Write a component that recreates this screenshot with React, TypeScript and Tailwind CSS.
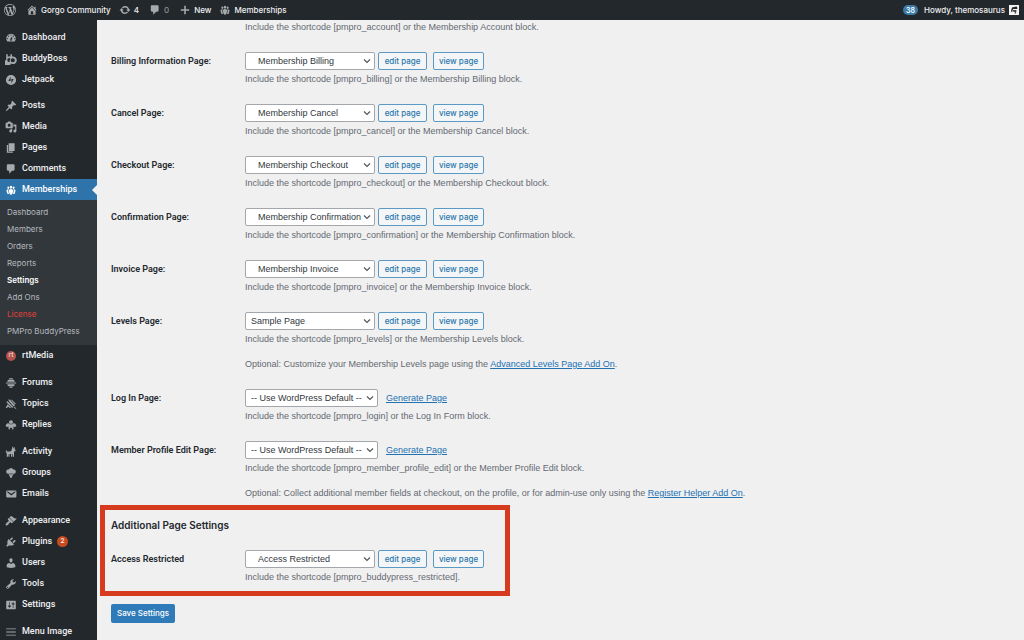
import type { ReactNode } from "react";

const ICONS = {
  wordpress:
    "M20 10c0-5.51-4.49-10-10-10C4.48 0 0 4.49 0 10c0 5.52 4.48 10 10 10 5.51 0 10-4.48 10-10zM7.78 15.37L4.37 6.22c.55-.02 1.17-.08 1.17-.08.5-.06.44-1.13-.06-1.11 0 0-1.45.11-2.37.11-.18 0-.37 0-.58-.01C4.12 2.69 6.87 1.11 10 1.11c2.33 0 4.45.87 6.05 2.34-.68-.11-1.65.39-1.65 1.58 0 .74.45 1.36.9 2.1.35.61.55 1.36.55 2.46 0 1.49-1.4 5-1.4 5l-3.03-8.37c.54-.02.82-.17.82-.17.5-.05.44-1.25-.06-1.22 0 0-1.44.12-2.38.12-.87 0-2.33-.12-2.33-.12-.5-.03-.56 1.2-.06 1.22l.92.08 1.26 3.41zM17.41 10c.24-.64.74-1.87.43-4.25.7 1.29 1.05 2.71 1.05 4.25 0 3.29-1.73 6.24-4.4 7.78.97-2.59 1.94-5.2 2.92-7.78zM6.1 18.09C3.12 16.65 1.11 13.53 1.11 10c0-1.3.23-2.48.72-3.59C3.25 10.3 4.67 14.2 6.1 18.09zm4.03-6.63l2.58 6.98c-.86.29-1.76.45-2.71.45-.79 0-1.57-.11-2.29-.33.81-2.38 1.62-4.74 2.42-7.1z",
  home: "M16 8.5l1.53 1.53-1.06 1.06L10 4.6l-6.47 6.49-1.06-1.06L10 2.5l4 4v-2h2v4zm-6-2.46l6 5.99V18H4v-5.97zM12 17v-5H8v5h4z",
  update:
    "M10.2 3.28c3.53 0 6.43 2.61 6.92 6h2.08l-3.5 4-3.5-4h2.32c-.45-1.97-2.21-3.45-4.32-3.45-1.45 0-2.73.71-3.54 1.78L4.95 5.66C6.23 4.2 8.11 3.28 10.2 3.28zm-.4 13.44c-3.52 0-6.43-2.61-6.92-6H.8l3.5-4c1.17 1.33 2.33 2.67 3.5 4H5.48c.45 1.97 2.21 3.45 4.32 3.45 1.45 0 2.73-.71 3.54-1.78l1.71 1.95c-1.28 1.46-3.15 2.38-5.25 2.38z",
  comments:
    "M5 2h9c1.1 0 2 .9 2 2v7c0 1.1-.9 2-2 2h-2l-5 5v-5H5c-1.1 0-2-.9-2-2V4c0-1.1.9-2 2-2z",
  plus: "M17 8.7v2.6h-5.7V17H8.7v-5.7H3V8.7h5.7V3h2.6v5.7z",
  groups:
    "M8.03 4.46c-.29 1.28.55 3.46 1.97 3.46 1.41 0 2.25-2.18 1.96-3.46-.22-.98-1.08-1.63-1.96-1.63-.89 0-1.74.65-1.97 1.63zm-4.13.9c-.25 1.08.47 2.93 1.67 2.93s1.92-1.85 1.67-2.93c-.19-.83-.92-1.39-1.67-1.39s-1.48.56-1.67 1.39zm8.86 0c-.25 1.08.47 2.93 1.66 2.93 1.2 0 1.92-1.85 1.67-2.93-.19-.83-.92-1.39-1.67-1.39-.74 0-1.47.56-1.66 1.39zm-.59 11.43l1.25-4.3C14.2 10 12.71 8.47 10 8.47c-2.72 0-4.21 1.53-3.44 4.02l1.26 4.3C8.05 17.51 9 18 10 18c.98 0 1.94-.49 2.17-1.21zm-6.1-7.63c-.49.67-.96 1.83-.42 3.59l1.12 3.79c-.34.2-.77.31-1.2.31-.85 0-1.65-.41-1.85-1.03l-1.07-3.65c-.65-2.11.61-3.4 2.92-3.4.27 0 .54.02.79.06-.1.1-.2.22-.29.33zm8.35-.39c2.31 0 3.58 1.29 2.92 3.4l-1.07 3.65c-.2.62-1 1.03-1.85 1.03-.43 0-.86-.11-1.2-.31l1.11-3.77c.55-1.78.08-2.94-.42-3.61-.08-.11-.18-.23-.28-.33.25-.04.51-.06.79-.06z",
  dashboard:
    "M3.76 16h12.48A7.998 7.998 0 0 0 10 3a7.998 7.998 0 0 0-6.24 13zM10 4c.55 0 1 .45 1 1s-.45 1-1 1-1-.45-1-1 .45-1 1-1zM6 6c.55 0 1 .45 1 1s-.45 1-1 1-1-.45-1-1 .45-1 1-1zm8 0c.55 0 1 .45 1 1s-.45 1-1 1-1-.45-1-1 .45-1 1-1zm-5.37 5.55L12 7v6c0 1.1-.9 2-2 2s-2-.9-2-2c0-.57.24-1.08.63-1.45zM4 10c.55 0 1 .45 1 1s-.45 1-1 1-1-.45-1-1 .45-1 1-1zm12 0c.55 0 1 .45 1 1s-.45 1-1 1-1-.45-1-1 .45-1 1-1zm-5 3c0-.55-.45-1-1-1s-1 .45-1 1 .45 1 1 1 1-.45 1-1z",
  buddyboss:
    "M2 2h2.6v4.3A5.500 5.500 0 0 1 9 5.700V2h2.600v4A6.300 6.300 0 1 1 12 18.200a6 6 0 0 1-2.600-.6A6 6 0 1 1 2 11.500zM7.500 8.400a3.300 3.300 0 1 0 .5 6.500 6.500 6.500 0 0 1 1.200-5.900 3.300 3.300 0 0 0-1.700-.6zM13 8.600a3.500 3.500 0 1 0 0 7 3.500 3.500 0 0 0 0-7z",
  jetpack:
    "M10 1.500a8.500 8.500 0 1 0 0 17 8.500 8.500 0 0 0 0-17zM9.300 4.400v7.100H5.600zM10.700 15.600V8.500h3.700z",
  post: "M10.440 3.020l1.820-1.820 6.360 6.350-1.830 1.820c-1.050-.68-2.480-.57-3.410.36l-.75.75c-.92.93-1.040 2.350-.35 3.410l-1.830 1.820-2.410-2.410-2.800 2.790c-.42.42-3.380 2.710-3.800 2.290s1.860-3.390 2.280-3.810l2.790-2.790L4.100 9.360l1.830-1.820c1.050.69 2.480.57 3.400-.36l.75-.75c.93-.92 1.050-2.350.36-3.410z",
  media:
    "M13 11V4c0-.55-.45-1-1-1h-1.670L9 1H5L3.670 3H2c-.55 0-1 .45-1 1v7c0 .55.45 1 1 1h10c.55 0 1-.45 1-1zM7 4.500c1.380 0 2.500 1.120 2.500 2.500S8.380 9.500 7 9.500 4.500 8.380 4.500 7 5.620 4.500 7 4.500zM14 6h5v10.500c0 1.380-1.120 2.500-2.500 2.500S14 17.880 14 16.500s1.120-2.500 2.500-2.500c.17 0 .34.02.5.05V9h-3V6zm-4 8.050V13h2v3.500c0 1.380-1.120 2.500-2.500 2.500S7 17.880 7 16.500 8.120 14 9.500 14c.17 0 .34.02.5.05z",
  pages: "M6 15V2h10v13H6zm-1 1h8v2H3V5h2v11z",
  forums:
    "M7.500 2h5l1.600 2.200H5.900zM5 5.200h10l1 1.600V8H4V6.800zM1.500 9h17v2h-17zM4 12h12v1.200l-1 1.600H5l-1-1.600zM6 15.800h8L11.800 18H8.200z",
  topics:
    "M5.500 2l3.200 1.500 7.800 8.500-2 2L6.700 5.500zM9.500 2.500l2.500.8 6 6.200-1.200 1.500zM2 6.500l2.500-1 9 9.500-1.500 1.500zM4.500 10.500l5.500 6-2.200.3-2-2.300L2 17l-.8-.8zM15.500 14l3.500 3.300-1 .9-3.600-3.200z",
  replies:
    "M10 2a3.300 3.300 0 0 1 3.300 3.300L12.500 8h-5l-.8-2.700A3.300 3.300 0 0 1 10 2zM5.500 6.500l1.500 2.200h6l1.500-2.200c2.500.8 4.500 3 4.500 5.500l-3.500 1.500-1.300-2v5.300L12 18v-3.500H8V18l-2.200-1.200v-5.300l-1.300 2L1 12c0-2.500 2-4.700 4.500-5.500z",
  activity:
    "M12.500 1h1.200v2.500L15 4V2h1.200v3l1.300 1.500v2.300h-2L15 10v8h-2v-4.500h-1V18h-1.800v-4.500H7.500V18H5.700v-3.500L5 13.200V18H3V12l-1.500-1V7h1.300v2H9l2-2 .5-2.500z",
  bpGroups:
    "M10 1.500a4 4 0 0 1 3.800 2.800A3.500 3.500 0 1 1 14 11.200c-.7 2.400-1.900 4.200-3.200 7.300H9.200C7.900 15.400 6.700 13.600 6 11.200a3.500 3.500 0 1 1 .2-6.900A4 4 0 0 1 10 1.500zM7.200 10.500l1.700 3.500V9.800zM12.800 10.500l-1.700-.7V14z",
  email:
    "M3.870 4h13.250C18.370 4 19 4.590 19 5.790v8.420c0 1.190-.63 1.790-1.880 1.790H3.870c-1.250 0-1.880-.6-1.880-1.790V5.790C1.990 4.590 2.620 4 3.870 4zm6.620 8.600l6.740-5.530c.24-.2.43-.66.13-1.070-.29-.41-.82-.42-1.170-.17l-5.700 3.860L4.800 5.830c-.35-.25-.88-.24-1.170.17-.3.41-.11.87.13 1.070z",
  appearance:
    "M14.480 11.060L7.410 3.990l1.500-1.500c.5-.56 2.300-.47 3.510.32 1.210.8 1.430 1.280 2.910 2.100 1.180.64 2.450 1.260 4.450.85zm-.71.71L6.700 4.700 4.930 6.470c-.39.39-.39 1.020 0 1.410l1.060 1.060c.39.39.39 1.030 0 1.420-.6.6-1.430 1.110-2.210 1.690-.35.26-.7.53-1.010.84C1.430 14.230.4 16.080 1.400 17.070c.99 1 2.840-.03 4.180-1.360.31-.31.58-.66.85-1.020.57-.78 1.080-1.610 1.690-2.210.39-.39 1.020-.39 1.410 0l1.060 1.060c.39.39 1.020.39 1.410 0z",
  plugins:
    "M13.110 4.360L9.870 7.600 8 5.730l3.240-3.240c.35-.34 1.050-.2 1.560.32.52.51.66 1.210.31 1.550zm-8 1.770l.91-1.120 9.010 9.010-1.190.84c-.71.71-2.630 1.160-3.820 1.160H6.140L4.900 17.260c-.59.59-1.540.59-2.120 0-.59-.58-.59-1.530 0-2.120l1.240-1.240v-3.880c0-1.130.4-3.190 1.090-3.890zm7.260 3.970l3.240-3.240c.34-.35 1.040-.21 1.550.31.52.51.66 1.210.31 1.550l-3.240 3.250z",
  users:
    "M10 9.250c-2.270 0-2.730-3.440-2.730-3.440C7 4.020 7.820 2 9.970 2c2.160 0 2.980 2.020 2.710 3.810 0 0-.41 3.440-2.680 3.440zm0 2.570L12.720 10c2.390 0 4.520 2.330 4.520 4.530v2.490s-3.650 1.130-7.240 1.130c-3.650 0-7.240-1.130-7.240-1.130v-2.490c0-2.250 1.940-4.480 4.470-4.480z",
  tools:
    "M16.680 9.770c-1.340 1.340-3.300 1.670-4.950.99l-5.410 6.520c-.99.99-2.590.99-3.580 0s-.99-2.590 0-3.570l6.520-5.420c-.68-1.650-.35-3.610.99-4.950 1.280-1.280 3.120-1.620 4.720-1.060l-2.890 2.890 2.820 2.820 2.860-2.870c.53 1.580.18 3.390-1.080 4.650zM3.810 16.210c.4.39 1.040.39 1.430 0 .4-.4.4-1.040 0-1.430-.39-.4-1.030-.4-1.430 0-.39.39-.39 1.030 0 1.430z",
  settings:
    "M18 16V4c0-.55-.45-1-1-1H3c-.55 0-1 .45-1 1v12c0 .55.45 1 1 1h14c.55 0 1-.45 1-1zM8 11h1c.55 0 1 .45 1 1s-.45 1-1 1H8v1.500c0 .28-.22.5-.5.5s-.5-.22-.5-.5V13H6c-.55 0-1-.45-1-1s.45-1 1-1h1V5.500c0-.28.22-.5.5-.5s.5.22.5.5V11zm5-2h-1c-.55 0-1-.45-1-1s.45-1 1-1h1V5.500c0-.28.22-.5.5-.5s.5.22.5.5V7h1c.55 0 1 .45 1 1s-.45 1-1 1h-1v5.500c0 .28-.22.5-.5.5s-.5-.22-.5-.5V9z",
  menu: "M2 4h16v1.500H2zM2 9.200h16v1.500H2zM2 14.400h16v1.500H2z",
};

type IconName = keyof typeof ICONS;

function Icon({ name, className }: { name: IconName; className: string }) {
  return (
    <svg viewBox="0 0 20 20" className={className} fill="currentColor" aria-hidden="true">
      <path fillRule="evenodd" d={ICONS[name]} />
    </svg>
  );
}

type MenuItem = { label: string; icon?: IconName; badge?: number };

const topMenu: MenuItem[][] = [
  [
    { label: "Dashboard", icon: "dashboard" },
    { label: "BuddyBoss", icon: "buddyboss" },
    { label: "Jetpack", icon: "jetpack" },
  ],
  [
    { label: "Posts", icon: "post" },
    { label: "Media", icon: "media" },
    { label: "Pages", icon: "pages" },
    { label: "Comments", icon: "comments" },
  ],
];

const submenu = [
  "Dashboard",
  "Members",
  "Orders",
  "Reports",
  "Settings",
  "Add Ons",
  "License",
  "PMPro BuddyPress",
];

const bottomMenu: MenuItem[][] = [
  [{ label: "rtMedia" }],
  [
    { label: "Forums", icon: "forums" },
    { label: "Topics", icon: "topics" },
    { label: "Replies", icon: "replies" },
  ],
  [
    { label: "Activity", icon: "activity" },
    { label: "Groups", icon: "bpGroups" },
    { label: "Emails", icon: "email" },
  ],
  [
    { label: "Appearance", icon: "appearance" },
    { label: "Plugins", icon: "plugins", badge: 2 },
    { label: "Users", icon: "users" },
    { label: "Tools", icon: "tools" },
    { label: "Settings", icon: "settings" },
  ],
];

const pages = [
  { id: "billing", label: "Billing Information Page:", page: "Membership Billing" },
  { id: "cancel", label: "Cancel Page:", page: "Membership Cancel" },
  { id: "checkout", label: "Checkout Page:", page: "Membership Checkout" },
  { id: "confirmation", label: "Confirmation Page:", page: "Membership Confirmation" },
  { id: "invoice", label: "Invoice Page:", page: "Membership Invoice" },
];

function MenuLink({ item }: { item: MenuItem }) {
  return (
    <li>
      <a href="#" className="flex h-[21px] items-center gap-[5px] pl-[5px] text-[#f0f0f1]">
        {item.icon ? (
          <Icon name={item.icon} className="size-3 text-[#a7aaad]" />
        ) : (
          <span className="mx-px flex size-[10px] items-center justify-center rounded-full bg-[#b5524c] text-[7px] leading-none text-[#e3c9c8]">
            rt
          </span>
        )}
        {item.label}
        {item.badge && (
          <span className="flex size-[11px] items-center justify-center rounded-full bg-[#ca4a1f] text-[7px] leading-none">
            {item.badge}
          </span>
        )}
      </a>
    </li>
  );
}

function Sidebar() {
  return (
    <nav className="w-[97px] shrink-0 overflow-hidden bg-[#23282d] pt-[7px] font-['Roboto',sans-serif] font-medium">
      {topMenu.map((group) => (
        <ul key={group[0].label} className="not-first:mt-[5px]">
          {group.map((item) => (
            <MenuLink key={item.label} item={item} />
          ))}
        </ul>
      ))}

      <a
        href="#"
        className="relative flex h-[21px] items-center gap-[5px] bg-[#2e74ab] pl-[5px] text-white"
      >
        <Icon name="groups" className="size-3" />
        Memberships
        <span className="absolute right-0 border-y-[5px] border-r-[5px] border-y-transparent border-r-[#f0f0f1]" />
      </a>
      <ul className="bg-[#32373c] pt-1 pb-[5px] pl-[7px] font-['Inter',sans-serif] text-[8px] font-normal text-[#b4b9be]">
        {submenu.map((label) => (
          <li key={label}>
            <a
              href="#"
              className={
                label === "Settings"
                  ? "block leading-[17px] font-semibold text-white"
                  : label === "License"
                    ? "block leading-[17px] text-[#e0413a]"
                    : "block leading-[17px]"
              }
            >
              {label}
            </a>
          </li>
        ))}
      </ul>

      {bottomMenu.map((group) => (
        <ul key={group[0].label} className="mb-[6px]">
          {group.map((item) => (
            <MenuLink key={item.label} item={item} />
          ))}
        </ul>
      ))}
      <ul>
        <MenuLink item={{ label: "Menu Image", icon: "menu" }} />
      </ul>
    </nav>
  );
}

function AdminBar() {
  return (
    <header className="flex h-5 shrink-0 items-center bg-[#23282d] pr-[5px] pl-1 text-[8px] font-medium text-[#f0f0f1]">
      <a href="#" aria-label="About WordPress">
        <Icon name="wordpress" className="size-3 text-[#a7aaad]" />
      </a>
      <a href="#" className="ml-[10px] flex items-center gap-[3px]">
        <Icon name="home" className="size-3 text-[#a7aaad]" />
        Gorgo Community
      </a>
      <a href="#" className="ml-2 flex items-center gap-[3px]">
        <Icon name="update" className="size-3 text-[#a7aaad]" />
        4
      </a>
      <a href="#" className="ml-[10px] flex items-center gap-[3px] text-[#8c9196]">
        <Icon name="comments" className="size-3 text-[#a7aaad]" />
        0
      </a>
      <a href="#" className="ml-[10px] flex items-center gap-[3px]">
        <Icon name="plus" className="size-3 text-[#a7aaad]" />
        New
      </a>
      <a href="#" className="ml-2 flex items-center gap-[3px]">
        <Icon name="groups" className="size-3 text-[#a7aaad]" />
        Memberships
      </a>
      <a
        href="#"
        className="ml-auto flex h-[10px] w-[15px] items-center justify-center rounded-full bg-[#3a7ba8] text-[7px] font-semibold text-white"
      >
        38
      </a>
      <a href="#" className="ml-[6px] flex items-center gap-1">
        Howdy, themosaurus
        <svg viewBox="0 0 10 10" className="size-[10px]" aria-hidden="true">
          <rect width="10" height="10" fill="#f4f4f4" />
          <path d="M3 2.500L7.500 1.500 8.500 3 8 4H4L3 7.500 2 6z" fill="#222" />
          <path d="M4 5h3.500L7 8.500H5.500L6 7 4 6.500z" fill="#444" />
        </svg>
      </a>
    </header>
  );
}

function PageSelect({ id, value, child }: { id: string; value: string; child?: boolean }) {
  return (
    <span className="relative flex">
      <select
        id={id}
        className={`h-[18px] appearance-none rounded-[2px] border border-[#a3a7ac] bg-white text-[#32373c] ${
          child ? "w-[130px] pl-3" : value.startsWith("--") ? "w-[133px] pl-[5px]" : "w-[130px] pl-[5px]"
        }`}
      >
        <option>{value}</option>
      </select>
      <svg
        viewBox="0 0 8 8"
        className="pointer-events-none absolute top-[5px] right-[4px] size-2"
        fill="none"
        stroke="#50575e"
        strokeWidth="1.200"
        aria-hidden="true"
      >
        <path d="M1 2.500l3 3 3-3" />
      </svg>
    </span>
  );
}

function PageButtons() {
  const button =
    "h-[18px] rounded-[2px] border border-[#5b9ac4] bg-[#f3f5f6] font-['Inter',sans-serif] text-[8px] font-medium text-[#2b78ad]";
  return (
    <>
      <button type="button" className={`${button} ml-[3px] w-[49px]`}>
        edit page
      </button>
      <button type="button" className={`${button} ml-[6px] w-[51px]`}>
        view page
      </button>
    </>
  );
}

function GenerateLink() {
  return (
    <a href="#" className="ml-2 text-[#2271b1] underline">
      Generate Page
    </a>
  );
}

function Row({ id, label, control, children }: {
  id: string;
  label: string;
  control: ReactNode;
  children: ReactNode;
}) {
  return (
    <div className="flex">
      <label
        htmlFor={id}
        className="w-[134px] shrink-0 font-['Roboto',sans-serif] leading-[18px] font-semibold text-[#23282d]"
      >
        {label}
      </label>
      <div>
        <div className="flex h-[18px] items-center">{control}</div>
        <div className="mt-[3px]">{children}</div>
      </div>
    </div>
  );
}

function App() {
  return (
    <div className="flex h-screen flex-col overflow-hidden bg-[#f0f0f1] font-['Inter',sans-serif] text-[9px] leading-[13px]">
      <AdminBar />
      <div className="flex min-h-0 flex-1">
        <Sidebar />
        <main className="min-w-0 flex-1 overflow-y-auto font-['Liberation_Sans',sans-serif] text-[#646970]">
          <form className="pt-px">
            <div className="flex flex-col gap-[18px] pl-[14px]">
              <p className="pl-[134px]">
                Include the shortcode [pmpro_account] or the Membership Account block.
              </p>
              {pages.map((row) => (
                <Row
                  key={row.id}
                  id={row.id}
                  label={row.label}
                  control={
                    <>
                      <PageSelect id={row.id} value={row.page} child />
                      <PageButtons />
                    </>
                  }
                >
                  <p>
                    Include the shortcode [pmpro_{row.id}] or the {row.page} block.
                  </p>
                </Row>
              ))}
              <Row
                id="levels"
                label="Levels Page:"
                control={
                  <>
                    <PageSelect id="levels" value="Sample Page" />
                    <PageButtons />
                  </>
                }
              >
                <p>Include the shortcode [pmpro_levels] or the Membership Levels block.</p>
                <p className="mt-3">
                  Optional: Customize your Membership Levels page using the{" "}
                  <a href="#" className="text-[#2271b1] underline">
                    Advanced Levels Page Add On
                  </a>
                  .
                </p>
              </Row>
              <Row
                id="login"
                label="Log In Page:"
                control={
                  <>
                    <PageSelect id="login" value="-- Use WordPress Default --" />
                    <GenerateLink />
                  </>
                }
              >
                <p>Include the shortcode [pmpro_login] or the Log In Form block.</p>
              </Row>
              <Row
                id="profile"
                label="Member Profile Edit Page:"
                control={
                  <>
                    <PageSelect id="profile" value="-- Use WordPress Default --" />
                    <GenerateLink />
                  </>
                }
              >
                <p>
                  Include the shortcode [pmpro_member_profile_edit] or the Member Profile Edit block.
                </p>
                <p className="mt-3">
                  Optional: Collect additional member fields at checkout, on the profile, or for
                  admin-use only using the{" "}
                  <a href="#" className="text-[#2271b1] underline">
                    Register Helper Add On
                  </a>
                  .
                </p>
              </Row>
            </div>

            <section className="mt-[5px] ml-[3px] w-[410px] border-[5px] border-[#d63a1f] px-[6px] py-[7px]">
              <h2 className="mb-[17px] font-['Inter',sans-serif] text-[10px] leading-4 font-semibold text-[#23282d]">
                Additional Page Settings
              </h2>
              <Row
                id="restricted"
                label="Access Restricted"
                control={
                  <>
                    <PageSelect id="restricted" value="Access Restricted" child />
                    <PageButtons />
                  </>
                }
              >
                <p>Include the shortcode [pmpro_buddypress_restricted].</p>
              </Row>
            </section>

            <button
              type="submit"
              className="mt-2 ml-[14px] h-[19px] w-16 rounded-[2px] bg-[#2f7ab8] font-['Inter',sans-serif] text-[8px] font-medium text-white"
            >
              Save Settings
            </button>
          </form>
        </main>
      </div>
    </div>
  );
}

export default App;
